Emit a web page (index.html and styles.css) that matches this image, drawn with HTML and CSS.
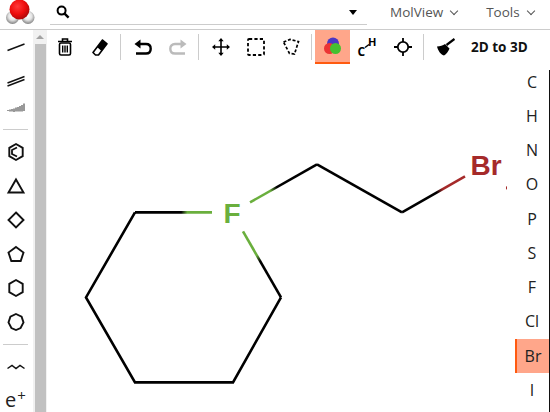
FILE: index.html
```html
<!DOCTYPE html>
<html lang="en">
<head>
  <meta charset="UTF-8" />
  <title>MolView</title>
  <link rel="stylesheet" href="styles.css">
</head>
<body>

  <div class="topbar">
    <svg class="logo" width="38" height="29" viewBox="0 0 38 29">
      <defs>
        <radialGradient id="red" cx="40%" cy="35%" r="65%">
          <stop offset="0" stop-color="#ff3a3a"/>
          <stop offset="0.6" stop-color="#ee0c0c"/>
          <stop offset="1" stop-color="#b00808"/>
        </radialGradient>
        <radialGradient id="white" cx="50%" cy="40%" r="60%">
          <stop offset="0" stop-color="#ffffff"/>
          <stop offset="0.5" stop-color="#e4e4e4"/>
          <stop offset="1" stop-color="#808080"/>
        </radialGradient>
      </defs>
      <circle cx="12.5" cy="17.5" r="6.5" fill="url(#white)"/>
      <circle cx="28" cy="17.5" r="6.5" fill="url(#white)"/>
      <circle cx="19.5" cy="9.500" r="10" fill="url(#red)"/>
    </svg>
    <div class="search">
      <svg width="14" height="14" viewBox="0 0 14 14">
        <circle cx="5.6" cy="5.6" r="4" fill="none" stroke="#000" stroke-width="2"/>
        <path d="M8.6 8.6L12.6 12.6" stroke="#000" stroke-width="2.4"/>
      </svg>
      <span class="caret"></span>
    </div>
    <div class="menu menu-molview">MolView <span class="chev"></span></div>
    <div class="menu menu-tools">Tools <span class="chev"></span></div>
  </div>

  <div class="main">
    <div class="left">
      <div class="left-item"><svg width="18" height="20" viewBox="0 0 18 20"><path d="M0.500 13.500L17.500 7" stroke="#111" stroke-width="1.500"/></svg></div>
      <div class="left-item"><svg width="18" height="20" viewBox="0 0 18 20"><path d="M0.500 12L17.500 5.500M0.500 15L17.500 8.500" stroke="#111" stroke-width="1.400"/></svg></div>
      <div class="left-item left-short"><svg width="18" height="14" viewBox="0 0 18 14"><path d="M1 10v1M3 9.500v2M5 9v2.500M7 8.500v3.500M9 7.500v4M11 7v4.500M13 6v5.500M15 5v6.500M17 3.500v7.500" stroke="#333" stroke-width="1"/></svg></div>
      <div class="left-sep left-sep-first"></div>
      <div class="left-item"><svg width="20" height="20" viewBox="0 0 20 20"><path d="M10 2L16.700 5.800V14.200L10 18L3.300 14.200V5.800Z" fill="none" stroke="#111" stroke-width="1.900"/><path d="M11 5.500L6 8V12L11 14.500" fill="none" stroke="#111" stroke-width="1.800"/></svg></div>
      <div class="left-item"><svg width="20" height="20" viewBox="0 0 20 20"><path d="M10 3.500L17.500 16.500H2.500Z" fill="none" stroke="#111" stroke-width="1.900"/></svg></div>
      <div class="left-item"><svg width="20" height="20" viewBox="0 0 20 20"><path d="M10 2.500L17.500 10L10 17.500L2.500 10Z" fill="none" stroke="#111" stroke-width="1.900"/></svg></div>
      <div class="left-item"><svg width="20" height="20" viewBox="0 0 20 20"><path d="M10 3L17.500 8.500L14.700 17H5.300L2.500 8.500Z" fill="none" stroke="#111" stroke-width="1.900"/></svg></div>
      <div class="left-item"><svg width="20" height="20" viewBox="0 0 20 20"><path d="M10 2L16.700 5.800V14.200L10 18L3.300 14.200V5.800Z" fill="none" stroke="#111" stroke-width="1.900"/></svg></div>
      <div class="left-item"><svg width="20" height="20" viewBox="0 0 20 20"><path d="M10 2L15.600 4.600L17.500 10.500L14.600 16L10 18L5.400 16L2.500 10.500L4.400 4.600Z" fill="none" stroke="#111" stroke-width="1.900"/></svg></div>
      <div class="left-sep"></div>
      <div class="left-item"><svg width="18" height="20" viewBox="0 0 18 20"><path d="M0.500 11.500L5 8.500L9 11.500L13 8.500L17.500 11.500" fill="none" stroke="#111" stroke-width="1.500"/></svg></div>
      <div class="left-item charge">e<sup>+</sup></div>
    </div>

    <div class="scrollbar">
      <div class="scroll-up"><span></span></div>
      <div class="scroll-thumb"></div>
    </div>

    <div class="work">
      <div class="tools">
        <div class="tool">
          <svg width="16" height="18" viewBox="0 0 16 18"><path d="M1 3.500H15M5.500 3V1H10.500V3" fill="none" stroke="#000" stroke-width="1.600"/><rect x="2.500" y="5" width="11" height="12" rx="1.500" fill="none" stroke="#000" stroke-width="1.600"/><path d="M5.700 7.500V14.500M8 7.500V14.500M10.300 7.500V14.500" stroke="#000" stroke-width="1.400"/></svg>
        </div>
        <div class="tool">
          <svg width="16" height="17" viewBox="0 0 16 17"><path d="M10.500 1L15 4.800L6.500 16H3.500L1 13.500Z" fill="#fff" stroke="#000" stroke-width="1.600" stroke-linejoin="round"/><path d="M10.500 1L15 4.800L9.500 12L5 8Z" fill="#000"/></svg>
        </div>
        <div class="tool-sep"></div>
        <div class="tool">
          <svg width="18" height="17" viewBox="0 0 18 17"><path d="M6.500 0.500L0.500 5L6.500 9.500Z" fill="#000"/><path d="M4 5H12C15 5 16.700 7 16.700 9.700C16.700 12.500 15 14.500 12 14.500H2" fill="none" stroke="#000" stroke-width="2.400"/></svg>
        </div>
        <div class="tool">
          <svg width="18" height="17" viewBox="0 0 18 17"><path d="M11.500 0.500L17.500 5L11.500 9.500Z" fill="#bbb"/><path d="M14 5H6C3 5 1.300 7 1.300 9.700C1.300 12.500 3 14.500 6 14.500H16" fill="none" stroke="#bbb" stroke-width="2.400"/></svg>
        </div>
        <div class="tool-sep"></div>
        <div class="tool">
          <svg width="18" height="18" viewBox="0 0 18 18"><path d="M9 2V16M2 9H16" stroke="#000" stroke-width="1.600"/><path d="M9 0L11.700 3.200H6.300ZM9 18L11.700 14.800H6.300ZM0 9L3.200 6.300V11.700ZM18 9L14.800 6.300V11.700Z" fill="#000"/></svg>
        </div>
        <div class="tool">
          <svg width="18" height="18" viewBox="0 0 18 18"><rect x="1" y="1" width="16" height="16" rx="1" fill="none" stroke="#000" stroke-width="1.800" stroke-dasharray="3.200 2.200"/></svg>
        </div>
        <div class="tool">
          <svg width="18" height="18" viewBox="0 0 18 18"><path d="M1.500 4L8 1.500L16.500 3.500L12.500 16L7.500 15.500Z" fill="none" stroke="#000" stroke-width="1.700" stroke-dasharray="3 1.800"/></svg>
        </div>
        <div class="tool-sep tool-sep-tight"></div>
        <div class="tool tool-on">
          <svg width="18" height="18" viewBox="0 0 18 18">
            <circle cx="9" cy="6.500" r="6" fill="#4b37c4"/>
            <circle cx="5.500" cy="11.500" r="5.500" fill="#ec3434"/>
            <circle cx="11.500" cy="11.500" r="5.500" fill="#45c030"/>
          </svg>
        </div>
        <div class="tool tool-ch">
          <svg width="20" height="18" viewBox="0 0 20 18"><path d="M7 9.500L11 6.500" stroke="#000" stroke-width="1.500"/></svg>
          <span class="ch-c">C</span><span class="ch-h">H</span>
        </div>
        <div class="tool">
          <svg width="18" height="18" viewBox="0 0 18 18"><circle cx="9" cy="9" r="5.200" fill="none" stroke="#000" stroke-width="1.800"/><path d="M9 0V4M9 14V18M0 9H4M14 9H18" stroke="#000" stroke-width="1.800"/></svg>
        </div>
        <div class="tool-sep"></div>
        <div class="tool">
          <svg width="18" height="18" viewBox="0 0 18 18"><path d="M0 8.500C3 8.500 6 7.500 8 6L12.500 10.500C11.500 13 9.500 16 7 17.500C3.500 16.500 1 12.500 0 8.500Z" fill="#000"/><path d="M9.500 7L17.500 1" stroke="#000" stroke-width="2.200"/></svg>
        </div>
        <div class="to3d">2D to 3D</div>
      </div>

      <div class="lower">
        <svg class="canvas" width="468" height="347.400" viewBox="47 64.600 468 347.400">
          <defs>
            <linearGradient id="bond-f1" gradientUnits="userSpaceOnUse" x1="135" y1="212" x2="212" y2="212">
              <stop offset="0.6" stop-color="#000"/><stop offset="0.68" stop-color="#6aaf3d"/>
            </linearGradient>
            <linearGradient id="bond-f2" gradientUnits="userSpaceOnUse" x1="246" y1="237" x2="281" y2="297">
              <stop offset="0.3" stop-color="#6aaf3d"/><stop offset="0.4" stop-color="#000"/>
            </linearGradient>
            <linearGradient id="bond-f3" gradientUnits="userSpaceOnUse" x1="250" y1="202" x2="317" y2="164">
              <stop offset="0.3" stop-color="#6aaf3d"/><stop offset="0.4" stop-color="#000"/>
            </linearGradient>
            <linearGradient id="bond-br" gradientUnits="userSpaceOnUse" x1="402" y1="212" x2="465" y2="176">
              <stop offset="0.55" stop-color="#000"/><stop offset="0.65" stop-color="#a52a2a"/>
            </linearGradient>
          </defs>
          <path class="bond" d="M281 297L233 382H135L86 297L135 212"/>
          <path class="bond" stroke="url(#bond-f1)" d="M135 212H212"/>
          <path class="bond" stroke="url(#bond-f2)" d="M243 231L281 297"/>
          <path class="bond" stroke="url(#bond-f3)" d="M250 202L317 164"/>
          <path class="bond" d="M317 164L402 212"/>
          <path class="bond" stroke="url(#bond-br)" d="M402 212L465 176"/>
          <path d="M506.500 186v3" stroke="#a52a2a" stroke-width="1"/>
          <text class="atom-f" x="232" y="222.500">F</text>
          <text class="atom-br" x="486" y="174.500">Br</text>
        </svg>

        <div class="atoms">
          <div class="atom">C</div>
          <div class="atom">H</div>
          <div class="atom">N</div>
          <div class="atom">O</div>
          <div class="atom">P</div>
          <div class="atom">S</div>
          <div class="atom">F</div>
          <div class="atom">Cl</div>
          <div class="atom atom-on">Br</div>
          <div class="atom">I</div>
        </div>
      </div>
    </div>
  </div>

</body>
</html>
```

FILE: styles.css
```css
html, body {
  height: 100%;
}

body {
  margin: 0;
  background: #fff;
  font-family: 'Open Sans', sans-serif;
  color: #222;
  overflow: hidden;
  display: flex;
  flex-direction: column;
}

svg {
  display: block;
}

.topbar {
  display: flex;
  height: 29px;
  flex: none;
  border-bottom: 1px solid #ccc;
}

.logo {
  flex: none;
  margin-right: 12px;
}

.search {
  width: 317px;
  height: 25px;
  border-bottom: 1px solid #ccc;
  display: flex;
  align-items: center;
  justify-content: space-between;
  padding: 0 10px 0 6px;
  box-sizing: border-box;
}

.caret {
  width: 0;
  height: 0;
  border-left: 4px solid transparent;
  border-right: 4px solid transparent;
  border-top: 5px solid #000;
}

.menu {
  font-size: 13.5px;
  height: 25px;
  line-height: 25px;
  color: #555;
  display: flex;
  align-items: center;
  gap: 8px;
}

.menu-molview {
  margin-left: 23px;
}

.menu-tools {
  margin-left: 29px;
}

.chev {
  width: 5px;
  height: 5px;
  border-right: 1px solid #555;
  border-bottom: 1px solid #555;
  transform: rotate(45deg);
  margin-top: -3px;
}

.main {
  flex: 1;
  display: flex;
  min-height: 0;
}

.left {
  width: 33px;
  flex: none;
  display: flex;
  flex-direction: column;
  align-items: center;
}

.left-item {
  height: 34px;
  width: 33px;
  flex: none;
  display: flex;
  align-items: center;
  justify-content: center;
  margin-left: -2px;
}

.left-short {
  height: 18px;
}

.left-sep {
  width: 25px;
  height: 1px;
  background: #ccc;
  margin: 5px 2px 5px 0;
  flex: none;
}

.left-sep-first {
  margin-top: 13px;
}

.charge {
  font-size: 20px;
  color: #222;
  align-items: flex-start;
  line-height: 32px;
}

.charge sup {
  font-size: 15px;
  line-height: 22px;
  margin-left: 1px;
}

.scrollbar {
  width: 14px;
  flex: none;
  background: #f1f1f1;
  display: flex;
  flex-direction: column;
  align-items: center;
}

.scroll-up {
  height: 14px;
  display: flex;
  align-items: center;
  flex: none;
}

.scroll-up span {
  width: 0;
  height: 0;
  border-left: 4px solid transparent;
  border-right: 4px solid transparent;
  border-bottom: 4px solid #a3a3a3;
}

.scroll-thumb {
  width: 11px;
  flex: 1;
  background: #c1c1c1;
}

.work {
  flex: 1;
  min-width: 0;
  display: flex;
  flex-direction: column;
}

.tools {
  height: 34.6px;
  flex: none;
  display: flex;
  align-items: flex-start;
}

.tool {
  width: 35px;
  height: 34px;
  flex: none;
  display: flex;
  align-items: center;
  justify-content: center;
  box-sizing: border-box;
}

.tool-sep {
  width: 1px;
  height: 26px;
  background: #ccc;
  margin: 4px 4px 0 3px;
  flex: none;
}

.tool-sep-tight {
  margin-right: 3px;
}

.tool-on {
  background: #ffa68a;
  border-bottom: 2px solid #ff5a0f;
}

.tool-ch {
  position: relative;
}

.ch-c, .ch-h {
  position: absolute;
  font-weight: 700;
  color: #000;
  line-height: 1;
}

.ch-c {
  font-size: 12px;
  left: 7.5px;
  top: 16px;
}

.ch-h {
  font-size: 11px;
  left: 18px;
  top: 6px;
}

.to3d {
  margin-left: 8px;
  font-size: 13.5px;
  line-height: 34px;
  font-weight: 700;
  color: #111;
  white-space: nowrap;
}

.lower {
  flex: 1;
  display: flex;
  min-height: 0;
}

.canvas {
  flex: none;
  overflow: visible;
}

.bond {
  fill: none;
  stroke-width: 2.6px;
}

.bond:not([stroke]) {
  stroke: #000;
}

.atom-f, .atom-br {
  font-family: 'Liberation Sans', sans-serif;
  font-weight: 700;
  font-size: 28px;
  text-anchor: middle;
}

.atom-f {
  fill: #6aaf3d;
}

.atom-br {
  fill: #a52a2a;
}

/* the dark edge starts a little under the toolbar */
.atoms {
  width: 35px;
  flex: none;
  box-sizing: border-box;
  padding-right: 1px;
  background: linear-gradient(#111, #111) right 0 top 5px / 1px 100% no-repeat;
}

.atom {
  height: 34.25px;
  display: flex;
  align-items: center;
  justify-content: center;
  font-size: 16px;
  color: #222;
}

.atom-on {
  background: #ffa68a;
  border-left: 2px solid #ff5a0f;
}
```
